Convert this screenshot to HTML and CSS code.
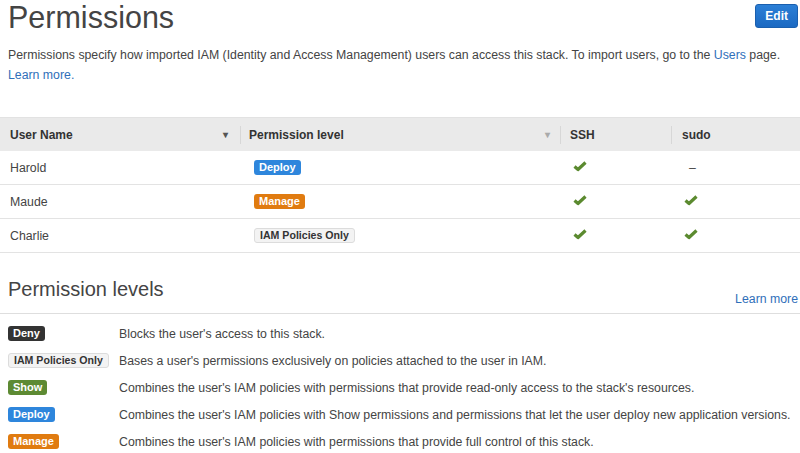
FILE: index.html
```html
<!DOCTYPE html>
<html>
<head>
<meta charset="utf-8">
<link rel="stylesheet" href="styles.css">
</head>
<body>
<div class="page">
  <header class="top">
    <h1 class="title">Permissions</h1>
    <button class="btn-edit">Edit</button>
  </header>
  <p class="intro">Permissions specify how imported IAM (Identity and Access Management) users can access this stack. To import users, go to the <a class="link">Users</a> page. <a class="link">Learn more.</a></p>

  <div class="table">
    <div class="row head">
      <div class="cell c1">User Name <span class="caret">▾</span></div>
      <div class="cell c2">Permission level <span class="caret light">▾</span></div>
      <div class="cell c3">SSH</div>
      <div class="cell c4">sudo</div>
    </div>
    <div class="row">
      <div class="cell c1">Harold</div>
      <div class="cell c2"><span class="badge deploy">Deploy</span></div>
      <div class="cell c3"><svg class="chk" viewBox="0 0 14 12"><path d="M1.5 6.5 L5 9.5 L12.5 2.5" fill="none" stroke="#5b8a2f" stroke-width="3.2" stroke-linejoin="round"/></svg></div>
      <div class="cell c4"><span class="dash">–</span></div>
    </div>
    <div class="row">
      <div class="cell c1">Maude</div>
      <div class="cell c2"><span class="badge manage">Manage</span></div>
      <div class="cell c3"><svg class="chk" viewBox="0 0 14 12"><path d="M1.5 6.5 L5 9.5 L12.5 2.5" fill="none" stroke="#5b8a2f" stroke-width="3.2" stroke-linejoin="round"/></svg></div>
      <div class="cell c4"><svg class="chk" viewBox="0 0 14 12"><path d="M1.5 6.5 L5 9.5 L12.5 2.5" fill="none" stroke="#5b8a2f" stroke-width="3.2" stroke-linejoin="round"/></svg></div>
    </div>
    <div class="row">
      <div class="cell c1">Charlie</div>
      <div class="cell c2"><span class="badge iam">IAM Policies Only</span></div>
      <div class="cell c3"><svg class="chk" viewBox="0 0 14 12"><path d="M1.5 6.5 L5 9.5 L12.5 2.5" fill="none" stroke="#5b8a2f" stroke-width="3.2" stroke-linejoin="round"/></svg></div>
      <div class="cell c4"><svg class="chk" viewBox="0 0 14 12"><path d="M1.5 6.5 L5 9.5 L12.5 2.5" fill="none" stroke="#5b8a2f" stroke-width="3.2" stroke-linejoin="round"/></svg></div>
    </div>
  </div>

  <div class="levels-head">
    <h2 class="subtitle">Permission levels</h2>
    <a class="link more">Learn more</a>
  </div>
  <ul class="levels">
    <li><span class="lb"><span class="badge deny">Deny</span></span><span class="desc">Blocks the user's access to this stack.</span></li>
    <li><span class="lb"><span class="badge iam">IAM Policies Only</span></span><span class="desc">Bases a user's permissions exclusively on policies attached to the user in IAM.</span></li>
    <li><span class="lb"><span class="badge show">Show</span></span><span class="desc">Combines the user's IAM policies with permissions that provide read-only access to the stack's resources.</span></li>
    <li><span class="lb"><span class="badge deploy">Deploy</span></span><span class="desc">Combines the user's IAM policies with Show permissions and permissions that let the user deploy new application versions.</span></li>
    <li><span class="lb"><span class="badge manage">Manage</span></span><span class="desc">Combines the user's IAM policies with permissions that provide full control of this stack.</span></li>
  </ul>
</div>
</body>
</html>
```
FILE: styles.css
```css
* { box-sizing: border-box; }
html, body { margin: 0; padding: 0; background: #fff; }
body { font-family: "Liberation Sans", Arial, sans-serif; color: #444; font-size: 12.3px; }
.page { width: 800px; overflow: hidden; }
.top { display: flex; justify-content: space-between; align-items: flex-start; padding: 0 2px 0 8px; height: 40px; }
.title { margin: 0; font-weight: normal; font-size: 30.5px; line-height: 34px; color: #444; }
.btn-edit {
  margin-top: 4px; height: 24px; padding: 0 9px;
  border: 1px solid #1a5fae; border-radius: 3px;
  background: linear-gradient(#2b7fd6, #1b69c2);
  color: #fff; font: bold 12px "Liberation Sans", Arial, sans-serif;
}
.intro { margin: 6px 0 0; padding: 0 0 0 8px; line-height: 19.5px; color: #444; }
.link { color: #2f6fba; text-decoration: none; }

.table { margin-top: 32px; border-top: 1px solid #e2e2e2; }
.row { display: flex; height: 34px; align-items: center; border-bottom: 1px solid #e3e3e3; }
.row.head { height: 33px; background: #eaeaea; border-bottom: none; font-weight: bold; color: #333; font-size: 12px; }
.cell { display: flex; align-items: center; height: 100%; }
.c1 { width: 240px; padding-left: 10px; justify-content: space-between; padding-right: 10px; }
.head .c1 { padding-right: 12px; }
.c2 { width: 320px; padding-left: 14px; }
.head .c2 { padding-left: 8px; justify-content: space-between; padding-right: 10px; }
.c3 { width: 111px; padding-left: 13px; }
.head .c3 { padding-left: 9px; }
.c4 { flex: 1; padding-left: 13px; }
.head .c3, .head .c4 { border-left: 1px solid #d7d7d7; height: 18px; }
.head .c2 { border-left: 1px solid #d7d7d7; height: 18px; }
.head .c4 { padding-left: 10px; }
.caret { font-size: 10px; color: #555; }
.caret.light { color: #aaa; }
.chk { width: 14px; height: 12px; margin-top: -4px; }
.dash { padding-left: 5px; color: #444; }

.badge {
  display: inline-block; font-size: 11px; font-weight: bold; line-height: 15px;
  padding: 0 5px; border-radius: 3px; color: #fff; white-space: nowrap;
}
.deploy { background: #2e86dc; }
.manage { background: #e07b10; }
.show { background: #5d8a33; }
.deny { background: #333; }
.iam { background: #f3f3f3; color: #333; border: 1px solid #dcdcdc; line-height: 13px; padding: 0 5px; font-size: 10.6px; }

.levels-head { display: flex; justify-content: space-between; align-items: flex-end; margin-top: 24px; padding: 0 2px 12px 8px; border-bottom: 1px solid #dedede; }
.subtitle { margin: 0; font-weight: normal; font-size: 20px; line-height: 24px; color: #444; }
.more { font-size: 12.3px; margin-bottom: -5px; }
.levels { list-style: none; margin: 6px 0 0; padding: 0 0 0 8px; }
.levels li { display: flex; align-items: center; height: 27px; }
.lb { width: 111px; }
.desc { color: #444; white-space: nowrap; }
```
